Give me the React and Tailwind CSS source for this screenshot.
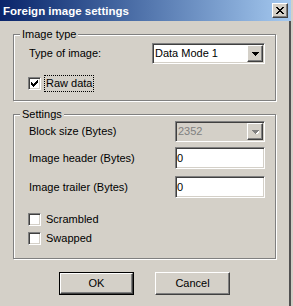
import React from 'react';

// Win2000-style bevels
const sunken =
  'border border-t-[#808080] border-l-[#808080] border-b-white border-r-white shadow-[inset_1px_1px_0_#404040,inset_-1px_-1px_0_#d4d0c8]';
const raised =
  'border border-t-white border-l-white border-b-[#404040] border-r-[#404040] shadow-[inset_-1px_-1px_0_#808080,inset_1px_1px_0_#d4d0c8]';

const Arrow = ({ disabled }) => (
  <svg width="7" height="4" shapeRendering="crispEdges">
    {disabled && <path d="M1 1h7L4.5 5z" fill="#fff" />}
    <path d="M0 0h7v1h-1v1h-1v1h-1v1h-1v-1h-1v-1h-1v-1h-1z" fill={disabled ? '#808080' : '#000'} />
  </svg>
);

const Combo = ({ value, disabled, className }) => (
  <div
    className={`flex items-center h-[21px] ${sunken} ${
      disabled ? 'bg-[#d4d0c8] text-[#808080]' : 'bg-white'
    } ${className}`}
  >
    <span className="flex-1 pl-[2px] leading-none">{value}</span>
    <div className={`w-[16px] h-[17px] mr-[1px] flex items-center justify-center bg-[#d4d0c8] ${raised}`}>
      <Arrow disabled={disabled} />
    </div>
  </div>
);

const TextField = ({ value, className }) => (
  <div className={`flex items-center h-[22px] bg-white ${sunken} ${className}`}>
    <span className="pl-[1px] leading-none">{value}</span>
  </div>
);

const CheckBox = ({ checked }) => (
  <div className={`w-[13px] h-[13px] shrink-0 bg-white flex items-center justify-center ${sunken}`}>
    {checked && (
      <svg width="7" height="7" shapeRendering="crispEdges">
        {[2, 3, 4, 3, 2, 1, 0].map((y, x) => (
          <rect key={x} x={x} y={y} width="1" height="3" fill="#000" />
        ))}
      </svg>
    )}
  </div>
);

const Group = ({ label, className, children }) => (
  <div
    className={`relative ml-[13px] w-[263px] border border-[#808080] shadow-[inset_1px_1px_0_#fff,1px_1px_0_#fff] ${className}`}
  >
    <span className="absolute left-[6px] top-[-8px] px-[2px] bg-[#d4d0c8] leading-[14px]">{label}</span>
    {children}
  </div>
);

const FieldRow = ({ label, className, children }) => (
  <div className={`flex items-center pl-[15px] pr-[10px] ${className}`}>
    <span className="flex-1">{label}</span>
    {children}
  </div>
);

const Button = ({ children, isDefault }) =>
  isDefault ? (
    <div className="w-[75px] h-[23px] border border-black bg-[#d4d0c8]">
      <div className={`w-full h-full flex items-center justify-center ${raised}`}>{children}</div>
    </div>
  ) : (
    <div className={`w-[75px] h-[23px] flex items-center justify-center bg-[#d4d0c8] ${raised}`}>{children}</div>
  );

const App = () => {
  return (
    <div className="w-[293px] h-[306px] overflow-hidden bg-[#d4d0c8] text-black text-[11px] font-['Liberation_Sans',Arial,sans-serif]">
      {/* Title bar */}
      <div className="w-[291px] h-[21px] flex items-center pl-[3px] pr-[3px] bg-linear-to-r from-[#0a246a] to-[#a6caf0]">
        <span className="flex-1 pt-[2px] font-bold text-white text-[11.5px]">Foreign image settings</span>
        <div className={`w-[16px] h-[15px] flex items-center justify-center bg-[#d4d0c8] ${raised}`}>
          <svg width="8" height="7" shapeRendering="crispEdges">
            {[0, 1, 2, 3, 4, 5, 6].map((y) => (
              <g key={y} fill="#000">
                <rect x={y} y={y} width="2" height="1" />
                <rect x={6 - y} y={y} width="2" height="1" />
              </g>
            ))}
          </svg>
        </div>
      </div>

      {/* Dialog body */}
      <div className="w-[291px] h-[285px] pt-[13px] border-r-2 border-[#505050]">
        <Group label="Image type" className="h-[67px]">
          <FieldRow label="Type of image:" className="mt-[8px]">
            <Combo value="Data Mode 1" className="w-[113px]" />
          </FieldRow>
          <div className="flex items-center h-[17px] mt-[11px] pl-[14px]">
            <CheckBox checked />
            <span className="ml-[3px] px-[1px] border border-dotted border-black leading-[15px]">Raw data</span>
          </div>
        </Group>

        <Group label="Settings" className="h-[145px] mt-[13px]">
          <FieldRow label="Block size (Bytes)" className="mt-[6px]">
            <Combo value="2352" disabled className="w-[90px]" />
          </FieldRow>
          <FieldRow label="Image header (Bytes)" className="mt-[5px]">
            <TextField value="0" className="w-[90px]" />
          </FieldRow>
          <FieldRow label="Image trailer (Bytes)" className="mt-[7px]">
            <TextField value="0" className="w-[90px]" />
          </FieldRow>
          <div className="flex items-center h-[13px] mt-[15px] pl-[14px]">
            <CheckBox />
            <span className="ml-[5px]">Scrambled</span>
          </div>
          <div className="flex items-center h-[13px] mt-[6px] pl-[14px]">
            <CheckBox />
            <span className="ml-[5px]">Swapped</span>
          </div>
        </Group>

        <div className="flex justify-center gap-[21px] mt-[13px]">
          <Button isDefault>OK</Button>
          <Button>Cancel</Button>
        </div>
      </div>
    </div>
  );
};

export default App;
